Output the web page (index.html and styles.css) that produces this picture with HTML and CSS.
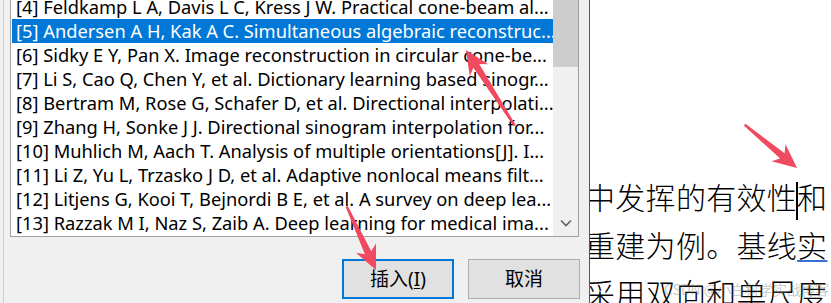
FILE: index.html
```html
<!DOCTYPE html>
<html lang="zh">
<head>
<meta charset="utf-8">
<title>插入参考文献</title>
<link rel="stylesheet" href="styles.css">
</head>
<body>
<div class="page">
  <div class="dialog">
    <div class="frame">
      <div class="listbox">
        <ul class="items">
          <li class="item">[4] Feldkamp L A, Davis L C, Kress J W. Practical cone-beam al...</li>
          <li class="item selected">[5] Andersen A H, Kak A C. Simultaneous algebraic reconstruc...</li>
          <li class="item">[6] Sidky E Y, Pan X. Image reconstruction in circular cone-be...</li>
          <li class="item">[7] Li S, Cao Q, Chen Y, et al. Dictionary learning based sinogr...</li>
          <li class="item">[8] Bertram M, Rose G, Schafer D, et al. Directional interpolati...</li>
          <li class="item">[9] Zhang H, Sonke J J. Directional sinogram interpolation for...</li>
          <li class="item">[10] Muhlich M, Aach T. Analysis of multiple orientations[J]. I...</li>
          <li class="item">[11] Li Z, Yu L, Trzasko J D, et al. Adaptive nonlocal means filt...</li>
          <li class="item">[12] Litjens G, Kooi T, Bejnordi B E, et al. A survey on deep lea...</li>
          <li class="item">[13] Razzak M I, Naz S, Zaib A. Deep learning for medical ima...</li>
        </ul>
        <div class="scrollbar">
          <div class="thumb"></div>
          <div class="track"></div>
          <div class="arrow-down">
            <svg width="12" height="8" viewBox="0 0 12 8"><path d="M1 1.5 L6 6.5 L11 1.5" fill="none" stroke="#606060" stroke-width="1.6"/></svg>
          </div>
        </div>
      </div>
      <div class="buttons">
        <button class="btn default">插入(<u>I</u>)</button>
        <button class="btn">取消</button>
      </div>
    </div>
  </div>
  <div class="doc">
    <div class="text">
      <p class="line">中发挥的有效性<span class="caret"></span>和</p>
      <p class="line">重建为例。基线<span class="spell">实</span></p>
      <p class="line">采用双向和单尺度</p>
    </div>
    <span class="watermark">CSDN @小白科学实战博客</span>
  </div>
  <svg class="annotations" width="831" height="303" viewBox="0 0 831 303">
    <g fill="#ef4a5f">
      <g transform="translate(466 50) rotate(-122.8)">
        <polygon points="0,0 -24,-11 -19,-3.5 -90,-1.2 -90,1.2 -19,3.5 -24,11"/>
      </g>
      <g transform="translate(797 168) rotate(39.6)">
        <polygon points="0,0 -24,-11 -19,-3.5 -68,-1.2 -68,1.2 -19,3.5 -24,11"/>
      </g>
      <g transform="translate(376 270) rotate(65.3)">
        <polygon points="0,0 -24,-11 -19,-3.5 -70,-1.2 -70,1.2 -19,3.5 -24,11"/>
      </g>
    </g>
  </svg>
</div>
</body>
</html>
```
FILE: styles.css
```css
html, body {
  margin: 0;
  padding: 0;
  background: #f0f0f0;
}
.page {
  position: relative;
  width: 831px;
  height: 303px;
  display: flex;
  overflow: hidden;
}
.dialog {
  box-sizing: border-box;
  width: 590px;
  height: 303px;
  background: #f0f0f0;
  border-right: 1px solid #555;
  flex: none;
}
.frame {
  margin-left: 3px;
  height: 100%;
  border-left: 1px solid #cfcfcf;
  padding-left: 6px;
}
.listbox {
  box-sizing: border-box;
  width: 569px;
  height: 237px;
  background: #fff;
  border: 1px solid #a0a0a0;
  border-top: none;
  display: flex;
  overflow: hidden;
}
.items {
  list-style: none;
  margin: -5px 0 0 0;
  padding: 0 0 0 1px;
  width: 541px;
  overflow: hidden;
  font-family: "Noto Sans", "Open Sans", sans-serif;
  font-size: 18.3px;
  color: #000;
}
.item {
  height: 24px;
  line-height: 24px;
  padding-left: 4px;
  white-space: nowrap;
  overflow: hidden;
}
.item.selected {
  background: #0078d7;
  color: #fff;
}
.scrollbar {
  width: 25px;
  flex: none;
  display: flex;
  flex-direction: column;
  background: #f0f0f0;
}
.thumb {
  height: 67px;
  background: #cdcdcd;
}
.track {
  flex: 1;
}
.arrow-down {
  height: 27px;
  display: flex;
  justify-content: center;
  align-items: center;
}
.arrow-down svg {
  display: block;
}
.buttons {
  width: 570px;
  margin-top: 22px;
  display: flex;
  justify-content: flex-end;
  gap: 14px;
}
.btn {
  box-sizing: border-box;
  width: 112px;
  height: 40px;
  background: #e1e1e1;
  border: 1px solid #adadad;
  font-family: "Noto Sans", "Noto Sans CJK SC", sans-serif;
  font-size: 19px;
  color: #000;
  padding: 0;
  line-height: 1;
}
.btn.default {
  border: 2px solid #0078d7;
}
.btn u {
  text-underline-offset: 2px;
}
.doc {
  position: relative;
  flex: 1;
  background: #fff;
  overflow: hidden;
  padding-top: 172px;
}
.text {
  margin-left: -5px;
  white-space: nowrap;
}
.line {
  margin: 0;
  height: 48px;
  line-height: 48px;
  font-family: "Noto Sans CJK SC", sans-serif;
  font-size: 30px;
  font-weight: 300;
  letter-spacing: 0.3px;
  color: #000;
}
.caret {
  display: inline-block;
  width: 2px;
  height: 38px;
  margin: 0 -1px;
  background: #000;
  vertical-align: middle;
}
.spell {
  text-decoration: underline;
  text-decoration-color: #3b6fd6;
  text-decoration-thickness: 2px;
  text-underline-offset: 3px;
}
.watermark {
  position: absolute;
  left: 74px;
  top: 279px;
  font-family: "Noto Sans CJK SC", sans-serif;
  font-size: 14px;
  color: rgba(120, 120, 120, 0.4);
  white-space: nowrap;
}
.annotations {
  position: absolute;
  left: 0;
  top: 0;
  pointer-events: none;
}
```
